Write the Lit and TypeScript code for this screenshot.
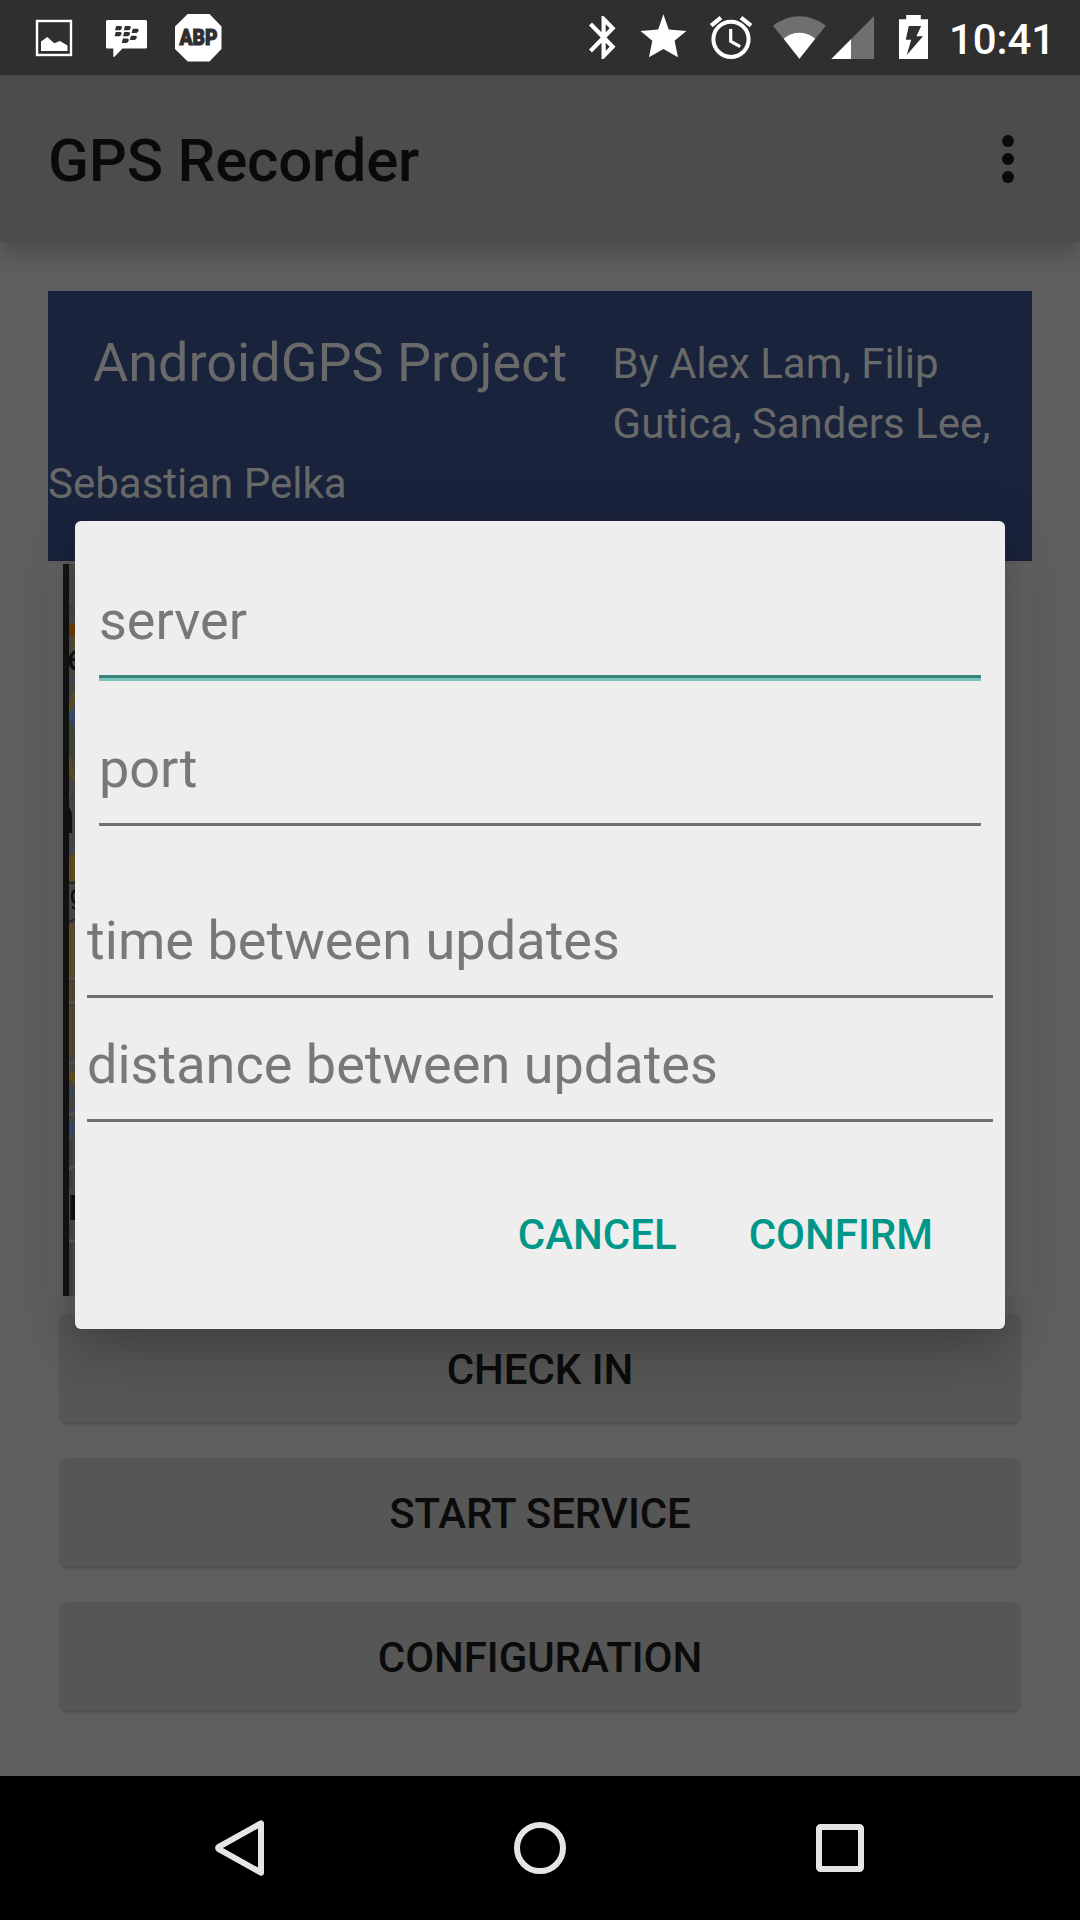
import { LitElement, html, svg, css } from "lit";
import { customElement, property } from "lit/decorators.js";

interface StatusIcon {
  x: number;
  width: number;
  art: unknown;
}

const NOTIFICATIONS: StatusIcon[] = [
  {
    x: 28,
    width: 62,
    art: svg`
      <rect x="37" y="21" width="34" height="34" fill="none" stroke="#fff" stroke-width="2.4"/>
      <path d="M41 51V41.5L47.3 37l7 6.3 5.7-2.3 7.5 4.4V51z"/>`,
  },
  {
    x: 90,
    width: 71,
    art: svg`
      <path d="M107.500 20h38a1.500 1.500 0 0 1 1.500 1.500v25.500a1.500 1.500 0 0 1-1.500 1.500H122.500l-8 8.300q-1.200.6-1.200-.6V48.500h-5.800a1.500 1.500 0 0 1-1.500-1.500V21.500a1.500 1.500 0 0 1 1.500-1.500z"/>
      <g fill="#2f2f2f">
        <path d="M116.200 26h4.300q1.800.2 1.500 1.800-.5 2.400-2.300 2.500H115z"/>
        <path d="M125 26h4.300q1.800.2 1.500 1.800-.5 2.400-2.300 2.500H123.800z"/>
        <path d="M115.800 32h4.300q1.800.2 1.500 1.800-.5 2.400-2.300 2.500H114.600z"/>
        <path d="M124.200 32h4.300q1.800.2 1.500 1.800-.5 2.400-2.300 2.500H123z"/>
        <path d="M132.800 28.800h4.300q1.800.2 1.500 1.800-.5 2.400-2.300 2.500H131.600z"/>
        <path d="M131 35.800h4.300q1.800.2 1.500 1.800-.5 2.400-2.300 2.500H129.800z"/>
        <path d="M122.900 38.600h4.300q1.800.2 1.500 1.800-.5 2.400-2.300 2.500H121.700z"/>
      </g>`,
  },
  {
    x: 161,
    width: 75,
    art: svg`
      <path d="M187.700 14h21.800l12 12.600v22.400l-12 12.500h-21.800L175 49V26.600z"/>
      <text x="179.500" y="45" textLength="38" lengthAdjust="spacingAndGlyphs" stroke="#2f2f2f" stroke-width="1.100"
        font-family="Roboto" font-weight="900" font-size="22" fill="#2f2f2f">ABP</text>`,
  },
];

const SYSTEM_ICONS: StatusIcon[] = [
  {
    x: 578,
    width: 50,
    art: svg`<path transform="translate(578.600 11.700) scale(2.085 2.150)"
      d="M17.710 7.710L12 2h-1v7.590L6.410 5 5 6.410 10.590 12 5 17.590 6.410 19 11 14.410V22h1l5.710-5.710-4.300-4.290 4.300-4.290zM13 5.830l1.880 1.880L13 9.590V5.830zm1.880 10.460L13 18.170v-3.760l1.880 1.880z"/>`,
  },
  {
    x: 628,
    width: 72,
    art: svg`<path d="M663.400 14.300l5.300 15.200 17.700 1.500-11.800 9.700 3.400 16.600-14.600-8.300-14.400 8.300 3.300-16.600L640.500 31l17.700-1.500z"/>`,
  },
  {
    x: 700,
    width: 62,
    art: svg`
      <g fill="none" stroke="#fff">
        <circle cx="731" cy="39.300" r="17.600" stroke-width="4"/>
        <path stroke-width="3.200" d="M730.700 29v12.300l9.500 5.400"/>
        <path stroke-width="4.200" d="M711.200 25.600l9.800-8M741 17.600l10 8"/>
      </g>`,
  },
  {
    x: 762,
    width: 67,
    art: svg`
      <path fill="#6f6f6f" d="M799.400 58.800L773 25.700Q785 16.200 799.400 16.200T825.800 25.700z"/>
      <path d="M799.400 58.800L783.700 38.700Q791 32.800 799.400 32.800T815.200 38.700z"/>`,
  },
  {
    x: 829,
    width: 57,
    art: svg`
      <path fill="#6f6f6f" d="M831.300 59L874 16v43z"/>
      <path d="M831.300 59L851 39.200V59z"/>`,
  },
  {
    x: 886,
    width: 63,
    art: svg`
      <path d="M899 19.300h7.200V15h14.600v4.300H928V59h-29z"/>
      <path fill="#2f2f2f" d="M908.800 26h12.400l-4.800 10.200h6.600L906.800 55l4.400-15.200h-5.400z"/>`,
  },
];

const statusIcon = (icon: StatusIcon) => html`
  <svg width=${icon.width} height="75" viewBox="${icon.x} 0 ${icon.width} 75" fill="#fff">${icon.art}</svg>
`;

@customElement("status-bar")
export class StatusBar extends LitElement {
  static styles = css`
    :host {
      display: flex;
      height: 75px;
      padding-left: 28px;
      background: #2f2f2f;
      color: #fff;
    }
    svg {
      flex: none;
    }
    .spacer {
      width: 342px;
      flex: none;
    }
    .clock {
      font-size: 42px;
      font-weight: 500;
      letter-spacing: -0.1px;
      line-height: 75px;
      padding-top: 2px;
      height: 73px;
    }
  `;

  render() {
    return html`
      ${NOTIFICATIONS.map(statusIcon)}
      <div class="spacer"></div>
      ${SYSTEM_ICONS.map(statusIcon)}
      <span class="clock">10:41</span>
    `;
  }
}

/* Narrow strip of street map that shows beside the dialog. */
@customElement("map-strip")
export class MapStrip extends LitElement {
  static styles = css`
    :host {
      display: flex;
      height: 732px;
      padding-left: 15px;
      background: #636363;
    }
    .edge {
      width: 6px;
      background: #141414;
    }
    svg {
      flex: none;
      filter: brightness(0.85);
    }
  `;

  render() {
    return html`
      <div class="edge"></div>
      <svg width="6" height="732" viewBox="69 564 6 732" fill="none">
        <rect x="69" y="564" width="6" height="732" fill="#5f5d5a"/>
        <path d="M69 606l6 6M69 612l6 2M69 802l6-7" stroke="#504e4b" stroke-width="1.500"/>
        <path d="M69 624h6v12h-6z" fill="#824d05"/>
        <path d="M73.500 636h1.500v18h-1.500z" fill="#806a25"/>
        <path d="M69 683l6-6M69 694l6 18v18l-6-10z" stroke="#4d618c" stroke-width="2" fill="#4d618c"/>
        <path d="M69 711l6-18" stroke="#7d6828" stroke-width="4"/>
        <path d="M69 718q6 10 6 20v22l-6-4z" fill="#4f5d45"/>
        <path d="M69 758q1 13 6 21" stroke="#7d6828" stroke-width="4"/>
        <path d="M69 854l6-8" stroke="#4d618c" stroke-width="2.500"/>
        <path d="M69 860l6-9v30h-6z" fill="#7d6828"/>
        <path d="M69 883h6M69 922l6-3" stroke="#353535" stroke-width="2"/>
        <path d="M69 924h5v53h-5z" fill="#7d6828"/>
        <path d="M69 977h2.500v80H69z" fill="#796326"/>
        <path d="M69 978.500h6M69 1002.500h6M69 1062.500h6M69 1115l6-3M69 1169l6-3M69 1241h6" stroke="#777573" stroke-width="2"/>
        <path d="M69 1069l6 6v9l-6-5z" fill="#806a20"/>
        <path d="M69 1089l4-1-1 7h-3zM71 1112l4-6v7zM69 1124l6-2-2 10-4 6z" fill="#465d91"/>
        <path d="M70.500 1140v25M70.500 1171v18M70.500 1225v13M70.500 1244v52" stroke="#58504b" stroke-width="2.500"/>
        <g fill="#15140f" font-family="Roboto">
          <text x="67" y="671" font-size="38">e</text>
          <text x="46.500" y="833" font-size="50" font-weight="700">n</text>
          <text x="69.500" y="904" font-size="28">g</text>
          <text x="68" y="1220" font-size="46" font-weight="700">r</text>
        </g>
      </svg>
    `;
  }
}

@customElement("config-dialog")
export class ConfigDialog extends LitElement {
  static styles = css`
    :host {
      display: block;
      box-sizing: border-box;
      width: 930px;
      height: 808px;
      padding: 68px 12px 0;
      border-radius: 6px;
      background: #eee;
      box-shadow: 0 15px 54px rgba(0, 0, 0, 0.3);
    }
    .field {
      height: 64px;
      padding-bottom: 22px;
      border-bottom: 3px solid #707070;
      font-size: 54px;
      line-height: 64px;
      color: #787878;
    }
    .inset {
      margin: 0 12px;
    }
    .focused {
      border-bottom-color: #3b827a;
      box-shadow: 0 3px #78c3bc;
      margin-bottom: 59px;
    }
    .time {
      margin-top: 83px;
      letter-spacing: 0.05px;
    }
    .distance {
      margin-top: 35px;
      letter-spacing: 0.02px;
    }
    .actions {
      display: flex;
      justify-content: flex-end;
      gap: 72px;
      margin-top: 83px;
      padding-right: 60px;
    }
    .action {
      font-size: 42px;
      font-weight: 500;
      line-height: 60px;
      color: #009688;
    }
  `;

  render() {
    return html`
      <div class="field inset focused">server</div>
      <div class="field inset">port</div>
      <div class="field time">time between updates</div>
      <div class="field distance">distance between updates</div>
      <div class="actions">
        <span class="action">CANCEL</span>
        <span class="action">CONFIRM</span>
      </div>
    `;
  }
}

@customElement("raised-button")
export class RaisedButton extends LitElement {
  @property() label = "";

  static styles = css`
    :host {
      display: block;
      height: 108px;
      border-radius: 7px;
      background: #565656;
      box-shadow: 0 2px 3px rgba(0, 0, 0, 0.22);
      color: #0b0b0b;
      font-size: 42px;
      font-weight: 500;
      letter-spacing: -0.07px;
      line-height: 111px;
      text-align: center;
    }
  `;

  render() {
    return html`${this.label}`;
  }
}

@customElement("app-root")
export class AppRoot extends LitElement {
  static styles = css`
    :host {
      display: flex;
      flex-direction: column;
      position: relative;
      width: 1080px;
      height: 1920px;
      overflow: hidden;
      background: #5f5f5f;
      font-family: Roboto, sans-serif;
    }
    .toolbar {
      display: flex;
      align-items: center;
      justify-content: space-between;
      flex: none;
      height: 168px;
      padding: 0 57px 0 48px;
      background: #4c4c4c;
      box-shadow: 0 16px 18px -3px rgba(0, 0, 0, 0.2);
      color: #0a0a0a;
    }
    .title {
      padding-top: 3px;
      font-size: 60px;
      font-weight: 500;
      letter-spacing: -0.2px;
    }
    .content {
      flex: 1;
      padding: 48px 48px 0;
    }
    .banner {
      box-sizing: border-box;
      height: 270px;
      margin-bottom: 3px;
      padding-top: 43px;
      background: #19233c;
      color: #696969;
      font-size: 42px;
      line-height: 60px;
    }
    .banner-row {
      display: flex;
      gap: 45.500px;
      padding-left: 45px;
    }
    .project {
      font-size: 54px;
      line-height: 58px;
      white-space: nowrap;
    }
    .buttons {
      display: flex;
      flex-direction: column;
      gap: 36px;
      padding: 18px 12px 0;
    }
    .navbar {
      display: flex;
      align-items: center;
      justify-content: center;
      gap: 240px;
      flex: none;
      height: 144px;
      background: #000;
    }
    .dialog {
      position: absolute;
      left: 75px;
      top: 521px;
    }
  `;

  render() {
    return html`
      <status-bar></status-bar>
      <header class="toolbar">
        <span class="title">GPS Recorder</span>
        <svg width="30" height="60" viewBox="0 0 30 60" fill="#0a0a0a">
          <circle cx="15" cy="12" r="6"/>
          <circle cx="15" cy="30" r="6"/>
          <circle cx="15" cy="48" r="6"/>
        </svg>
      </header>
      <main class="content">
        <section class="banner">
          <div class="banner-row">
            <span class="project">AndroidGPS Project</span>
            <span>By Alex Lam, Filip<br>Gutica, Sanders Lee,</span>
          </div>
          <div>Sebastian Pelka</div>
        </section>
        <map-strip></map-strip>
        <div class="buttons">
          <raised-button label="CHECK IN"></raised-button>
          <raised-button label="START SERVICE"></raised-button>
          <raised-button label="CONFIGURATION"></raised-button>
        </div>
      </main>
      <nav class="navbar">
        <svg width="60" height="60" viewBox="0 0 60 60" fill="none" stroke="#e5e5e5" stroke-width="6" stroke-linejoin="round">
          <path d="M51 5.300v49.400L8.800 31.200q-1.400-1.200 0-2.400z"/>
        </svg>
        <svg width="60" height="60" viewBox="0 0 60 60" fill="none" stroke="#e5e5e5" stroke-width="6">
          <circle cx="30" cy="30" r="23"/>
        </svg>
        <svg width="60" height="60" viewBox="0 0 60 60" fill="none" stroke="#e5e5e5" stroke-width="6">
          <rect x="9" y="9" width="42" height="42" rx="1.500"/>
        </svg>
      </nav>
      <config-dialog class="dialog"></config-dialog>
    `;
  }
}
